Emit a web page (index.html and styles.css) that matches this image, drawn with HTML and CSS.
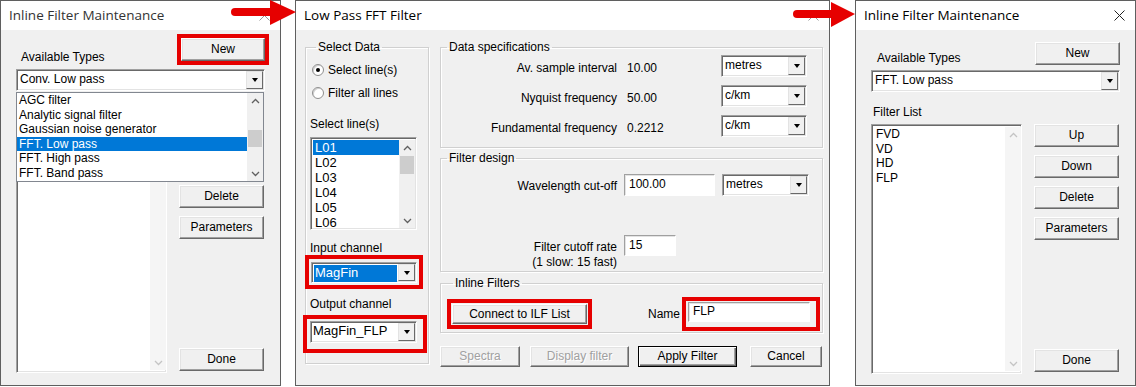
FILE: index.html
```html
<!DOCTYPE html>
<html lang="en">
<head>
  <meta charset="UTF-8">
  <meta name="viewport" content="width=device-width, initial-scale=1">
  <title>Inline Filter Maintenance</title>
  <link rel="stylesheet" href="styles.css">
</head>
<body>
<div class="desk">

  <!-- Janela 1: lista de tipos aberta -->
  <div class="dlg ilf ilf-first">
    <div class="titlebar">
      <span class="title title-off">Inline Filter Maintenance</span>
      <svg class="close close-off" width="11" height="11" viewBox="0 0 11 11"><path d="M0.5 0.5 L10.5 10.5 M10.5 0.5 L0.5 10.5" stroke="currentColor" stroke-width="1"/></svg>
    </div>
    <div class="ilf-body">
      <div class="ilf-top">
        <span class="lbl">Available Types</span>
        <span class="mark mark-new"><button class="btn btn-new">New</button></span>
      </div>
      <div class="combo ilf-combo"><span class="combo-text">Conv. Low pass</span><span class="combo-btn"><i class="tri"></i></span></div>
      <!-- rótulo coberto pela lista suspensa -->
      <div class="lbl ilf-listlbl ilf-gap"></div>
      <div class="ilf-main">
        <div class="listbox ilf-list">
          <div class="list-items"></div>
          <div class="vscroll vscroll-pale">
            <span class="sb-arrow"></span>
            <span class="sb-track"></span>
            <span class="sb-arrow"><svg width="9" height="6" viewBox="0 0 9 6"><polyline points="1,1 4.5,4.5 8,1" fill="none" stroke="#c4c4c4" stroke-width="1.3"/></svg></span>
          </div>
        </div>
        <div class="btn-col">
          <span class="btn-slot"></span>
          <span class="btn-slot"></span>
          <button class="btn">Delete</button>
          <button class="btn">Parameters</button>
          <button class="btn btn-done">Done</button>
        </div>
      </div>
    </div>

    <!-- lista suspensa do combo -->
    <div class="dropdown">
      <div class="dd-items">
        <div class="item">AGC filter</div>
        <div class="item">Analytic signal filter</div>
        <div class="item">Gaussian noise generator</div>
        <div class="item sel">FFT. Low pass</div>
        <div class="item">FFT. High pass</div>
        <div class="item">FFT. Band pass</div>
      </div>
      <div class="vscroll">
        <span class="sb-arrow"><svg width="9" height="6" viewBox="0 0 9 6"><polyline points="1,5 4.5,1.5 8,5" fill="none" stroke="#606060" stroke-width="1.3"/></svg></span>
        <span class="sb-track"><span class="sb-thumb dd-thumb"></span></span>
        <span class="sb-arrow"><svg width="9" height="6" viewBox="0 0 9 6"><polyline points="1,1 4.5,4.5 8,1" fill="none" stroke="#606060" stroke-width="1.3"/></svg></span>
      </div>
    </div>
  </div>

  <!-- Janela 2: filtro FFT -->
  <div class="dlg fft">
    <div class="titlebar">
      <span class="title">Low Pass FFT Filter</span>
      <svg class="close close-off" width="11" height="11" viewBox="0 0 11 11"><path d="M0.5 0.5 L10.5 10.5 M10.5 0.5 L0.5 10.5" stroke="currentColor" stroke-width="1"/></svg>
    </div>
    <div class="fft-body">

      <fieldset class="group sel-data">
        <legend>Select Data</legend>
        <div class="radio-row"><span class="radio on"></span>Select line(s)</div>
        <div class="radio-row radio-row2"><span class="radio"></span>Filter all lines</div>
        <div class="lbl lines-lbl">Select line(s)</div>
        <div class="listbox lines-list">
          <div class="list-items">
            <div class="item sel">L01</div>
            <div class="item">L02</div>
            <div class="item">L03</div>
            <div class="item">L04</div>
            <div class="item">L05</div>
            <div class="item">L06</div>
          </div>
          <div class="vscroll">
            <span class="sb-arrow"><svg width="9" height="6" viewBox="0 0 9 6"><polyline points="1,5 4.5,1.5 8,5" fill="none" stroke="#606060" stroke-width="1.3"/></svg></span>
            <span class="sb-track"><span class="sb-thumb lines-thumb"></span></span>
            <span class="sb-arrow"><svg width="9" height="6" viewBox="0 0 9 6"><polyline points="1,1 4.5,4.5 8,1" fill="none" stroke="#606060" stroke-width="1.3"/></svg></span>
          </div>
        </div>
        <div class="lbl chan-lbl">Input channel</div>
        <div class="mark mark-in">
          <div class="combo chan-combo"><span class="combo-text"><span class="hl-text">MagFin</span></span><span class="combo-btn"><i class="tri"></i></span></div>
        </div>
        <div class="lbl chan-lbl chan-lbl2">Output channel</div>
        <div class="mark mark-out">
          <div class="combo chan-combo chan-combo2"><span class="combo-text">MagFin_FLP</span><span class="combo-btn"><i class="tri"></i></span></div>
        </div>
      </fieldset>

      <div class="fft-right">
        <fieldset class="group spec">
          <legend>Data specifications</legend>
          <div class="spec-grid">
            <span class="rlbl">Av. sample interval</span>
            <span class="val">10.00</span>
            <div class="combo"><span class="combo-text">metres</span><span class="combo-btn"><i class="tri"></i></span></div>

            <span class="rlbl">Nyquist frequency</span>
            <span class="val">50.00</span>
            <div class="combo"><span class="combo-text">c/km</span><span class="combo-btn"><i class="tri"></i></span></div>

            <span class="rlbl">Fundamental frequency</span>
            <span class="val">0.2212</span>
            <div class="combo"><span class="combo-text">c/km</span><span class="combo-btn"><i class="tri"></i></span></div>
          </div>
        </fieldset>

        <fieldset class="group design">
          <legend>Filter design</legend>
          <div class="design-grid">
            <span class="rlbl wave-lbl">Wavelength cut-off</span>
            <span class="field">100.00</span>
            <div class="combo"><span class="combo-text">metres</span><span class="combo-btn"><i class="tri"></i></span></div>

            <span class="rlbl rate-lbl">Filter cutoff rate<br>(1 slow: 15 fast)</span>
            <span class="field rate-field">15</span>
          </div>
        </fieldset>

        <fieldset class="group inline">
          <legend>Inline Filters</legend>
          <div class="inline-row">
            <span class="mark mark-connect"><button class="btn btn-connect">Connect to ILF List</button></span>
            <span class="name-lbl">Name</span>
            <span class="mark mark-name"><span class="field name-field">FLP</span></span>
          </div>
        </fieldset>

        <div class="fft-buttons">
          <button class="btn btn-off btn-spectra">Spectra</button>
          <button class="btn btn-off btn-display">Display filter</button>
          <button class="btn btn-default btn-apply">Apply Filter</button>
          <button class="btn btn-cancel">Cancel</button>
        </div>
      </div>
    </div>
  </div>

  <!-- Janela 3: lista de filtros -->
  <div class="dlg ilf ilf-last">
    <div class="titlebar">
      <span class="title">Inline Filter Maintenance</span>
      <svg class="close" width="11" height="11" viewBox="0 0 11 11"><path d="M0.5 0.5 L10.5 10.5 M10.5 0.5 L0.5 10.5" stroke="currentColor" stroke-width="1"/></svg>
    </div>
    <div class="ilf-body">
      <div class="ilf-top">
        <span class="lbl">Available Types</span>
        <button class="btn">New</button>
      </div>
      <div class="combo ilf-combo"><span class="combo-text">FFT. Low pass</span><span class="combo-btn"><i class="tri"></i></span></div>
      <div class="lbl ilf-listlbl">Filter List</div>
      <div class="ilf-main">
        <div class="listbox ilf-list">
          <div class="list-items">
            <div class="item">FVD</div>
            <div class="item">VD</div>
            <div class="item">HD</div>
            <div class="item">FLP</div>
          </div>
          <div class="vscroll vscroll-pale">
            <span class="sb-arrow"><svg width="9" height="6" viewBox="0 0 9 6"><polyline points="1,5 4.5,1.5 8,5" fill="none" stroke="#c4c4c4" stroke-width="1.3"/></svg></span>
            <span class="sb-track"></span>
            <span class="sb-arrow"><svg width="9" height="6" viewBox="0 0 9 6"><polyline points="1,1 4.5,4.5 8,1" fill="none" stroke="#c4c4c4" stroke-width="1.3"/></svg></span>
          </div>
        </div>
        <div class="btn-col">
          <button class="btn">Up</button>
          <button class="btn">Down</button>
          <button class="btn">Delete</button>
          <button class="btn">Parameters</button>
          <button class="btn btn-done">Done</button>
        </div>
      </div>
    </div>
  </div>

  <!-- setas vermelhas por cima -->
  <svg class="arrow arrow-a" width="68" height="26" viewBox="0 0 68 26">
    <line x1="6" y1="12" x2="44" y2="12" stroke="#e60000" stroke-width="8" stroke-linecap="round"/>
    <polygon points="41,0 67,12 41,25" fill="#e60000"/>
  </svg>
  <svg class="arrow arrow-b" width="68" height="26" viewBox="0 0 68 26">
    <line x1="6" y1="12" x2="44" y2="12" stroke="#e60000" stroke-width="8" stroke-linecap="round"/>
    <polygon points="40,0 64,12 40,25" fill="#e60000"/>
  </svg>
</div>
</body>
</html>
```

FILE: styles.css
```css
* {
  box-sizing: border-box;
}

body {
  margin: 0;
  background: #fff;
  font-family: "Liberation Sans", Arial, sans-serif;
  font-size: 12px;
  color: #000;
}

.desk {
  position: relative;
  display: flex;
  width: 1136px;
  height: 387px;
  overflow: hidden;
}

/* janelas */
.dlg {
  position: relative;
  display: flex;
  flex-direction: column;
  height: 386px;
  border: 1px solid #5f5f5f;
  background: #f0f0f0;
}

.ilf {
  width: 281px;
}

.fft {
  width: 535px;
  margin-left: 14px;
}

.ilf-last {
  margin-left: 25px;
}

.titlebar {
  display: flex;
  align-items: center;
  height: 29px;
  padding: 0 10px 1px 8px;
  background: #fff;
}

.title {
  font-family: "Open Sans", "Noto Sans", sans-serif;
  font-size: 13.5px;
}

.title-off {
  color: #333;
}

.close {
  margin-left: auto;
  color: #222;
}

.close-off {
  color: #999;
}

.lbl {
  line-height: 14px;
}

/* botões */
.btn {
  display: flex;
  align-items: center;
  justify-content: center;
  width: 85px;
  height: 23px;
  padding: 0 0 1px;
  font: inherit;
  color: #000;
  background: #f0f0f0;
  border: 1px solid;
  border-color: #fff #696969 #696969 #fff;
  box-shadow: inset -1px -1px #a0a0a0, inset 1px 1px #e3e3e3;
}

.btn-slot {
  display: block;
  height: 23px;
}

.btn-off {
  color: #a0a0a0;
  text-shadow: 1px 1px #fff;
}

.btn-default {
  border: 1px solid #000;
  box-shadow: inset 1px 1px #fff, inset -1px -1px #696969, inset -2px -2px #a0a0a0;
}

/* marcações vermelhas */
.mark {
  display: flex;
  border: 4px solid #e60000;
}

.mark-new {
  margin-right: -4px;
}

.btn-new {
  width: 84px;
}

/* combo */
.combo {
  display: flex;
  height: 22px;
  background: #fff;
  border: 1px solid;
  border-color: #a0a0a0 #fff #fff #a0a0a0;
  box-shadow: inset 1px 1px #696969, inset -1px -1px #e3e3e3;
}

.combo-text {
  flex: 1;
  padding: 2px 0 0 3px;
  line-height: 14px;
  white-space: nowrap;
  overflow: hidden;
}

.combo-btn {
  display: flex;
  align-items: center;
  justify-content: center;
  width: 17px;
  margin: 1px 1px 1px 0;
  background: #f0f0f0;
  border: 1px solid;
  border-color: #e3e3e3 #696969 #696969 #e3e3e3;
}

.tri {
  width: 0;
  height: 0;
  border-left: 3.5px solid transparent;
  border-right: 3.5px solid transparent;
  border-top: 4px solid #000;
}

.field {
  display: block;
  height: 22px;
  padding: 2px 0 0 4px;
  line-height: 14px;
  background: #fff;
  border: 1px solid;
  border-color: #a0a0a0 #fff #fff #a0a0a0;
  box-shadow: inset 1px 1px #e3e3e3;
}

/* listas */
.listbox {
  display: flex;
  background: #fff;
  border: 1px solid;
  border-color: #a0a0a0 #fff #fff #a0a0a0;
  box-shadow: inset 1px 1px #696969, inset -1px -1px #e3e3e3;
  padding: 2px 1px 1px 2px;
}

.list-items {
  flex: 1;
  min-width: 0;
}

.item {
  height: 14.5px;
  line-height: 14.5px;
  padding-left: 2px;
  white-space: nowrap;
}

.item.sel {
  background: #0078d7;
  color: #fff;
}

.vscroll {
  display: flex;
  flex-direction: column;
  width: 16px;
  background: #f0f0f0;
}

.vscroll-pale {
  background: #f5f5f5;
}

.sb-arrow {
  display: flex;
  align-items: center;
  justify-content: center;
  height: 15px;
}

.sb-track {
  flex: 1;
  display: flex;
  flex-direction: column;
  padding: 0 1px;
}

.sb-thumb {
  height: 17px;
  background: #cdcdcd;
}

/* janela de manutenção */
.ilf-body {
  display: flex;
  flex-direction: column;
  padding: 12px 15px 0;
}

.ilf-first .ilf-body {
  padding-top: 4px;
}

.ilf-top {
  display: flex;
  justify-content: space-between;
  align-items: flex-end;
}

.ilf-top .lbl {
  padding-left: 6px;
}

.ilf-first .ilf-top .lbl {
  padding-left: 5px;
  margin-bottom: 1px;
}

.ilf-combo {
  margin-top: 5px;
}

.ilf-first .ilf-combo {
  margin-top: 4px;
}

.ilf-listlbl {
  margin-top: 13px;
  padding-left: 2px;
}

.ilf-gap {
  height: 14px;
}

.ilf-main {
  display: flex;
  gap: 12px;
  height: 250px;
  margin-top: 5px;
}

.ilf-list {
  width: 151px;
  padding-right: 0;
}

.ilf-list .vscroll {
  margin-bottom: 1px;
}

.btn-col {
  display: flex;
  flex-direction: column;
  gap: 8px;
  padding-bottom: 2px;
}

.btn-done {
  margin-top: auto;
}

.dropdown {
  position: absolute;
  top: 91px;
  left: 15px;
  display: flex;
  width: 248px;
  height: 90px;
  background: #fff;
  border: 1px solid #828790;
}

.dd-items {
  flex: 1;
}

.dd-thumb {
  margin-top: 22px;
}

/* janela do filtro FFT */
.fft-body {
  display: grid;
  grid-template-columns: 124px 383px;
  column-gap: 11px;
  padding: 10px 0 0 9px;
}

.group {
  min-width: 0;
  margin: 0;
  border: 1px solid #d0d0d0;
  box-shadow: 1px 1px #fff, inset 1px 1px #fff;
}

.group legend {
  margin-left: 6px;
  padding: 0 2px;
  line-height: 14px;
}

.sel-data {
  display: flex;
  flex-direction: column;
  height: 324px;
  padding: 8px 0 0 4px;
}

.radio-row {
  display: flex;
  align-items: center;
  gap: 4px;
  height: 16px;
  padding-left: 2px;
}

.radio-row2 {
  margin-top: 7px;
}

.radio {
  position: relative;
  width: 12px;
  height: 12px;
  border-radius: 50%;
  background: #fff;
  border: 1px solid #8f8f8f;
  box-shadow: inset 1px 1px #d0d0d0;
}

.radio.on::after {
  content: "";
  position: absolute;
  top: 3px;
  left: 3px;
  width: 4px;
  height: 4px;
  border-radius: 50%;
  background: #000;
}

.lines-lbl {
  margin-top: 16px;
}

.lines-list {
  width: 107px;
  height: 93px;
  margin-top: 6px;
}

.lines-list .item {
  height: 15px;
  line-height: 15px;
  font-size: 13px;
}

.lines-thumb {
  margin-top: 1px;
  height: 18px;
}

.chan-lbl {
  margin-top: 11px;
}

.chan-lbl2 {
  margin-top: 8px;
}

.mark-in {
  width: 118px;
  margin-left: -5px;
  padding: 3px 0 2px 2px;
}

.mark-out {
  width: 124px;
  margin: 4px 0 0 -7px;
  padding: 2px 0 6px 3px;
}

.chan-combo {
  width: 106px;
  height: 21px;
  font-size: 13px;
}

.chan-combo2 {
  width: 107px;
  height: 22px;
}

.chan-combo .combo-text {
  padding: 2px 1px 1px 2px;
}

.hl-text {
  display: block;
  height: 17px;
  padding-left: 1px;
  line-height: 15px;
  background: #0078d7;
  color: #fff;
}

.fft-right {
  display: flex;
  flex-direction: column;
}

.spec {
  padding: 1px 15px 10px 0;
}

.spec-grid {
  display: grid;
  grid-template-columns: 176px 84px 86px;
  column-gap: 10px;
  row-gap: 8px;
  align-items: start;
}

.spec-grid .rlbl,
.spec-grid .val {
  padding-top: 6px;
}

.rlbl {
  text-align: right;
  line-height: 15px;
}

.val {
  line-height: 15px;
}

.design {
  margin-top: 3px;
  padding: 9px 0 1px 0;
}

.design-grid {
  display: grid;
  grid-template-columns: 176px 91px 87px;
  column-gap: 7px;
  row-gap: 39px;
  align-items: start;
}

.wave-lbl {
  padding-top: 5px;
}

.rate-lbl {
  margin-top: 5px;
}

.rate-field {
  width: 52px;
  height: 21px;
}

.inline {
  margin-top: 4px;
  padding: 7px 2px 1px 6px;
}

.inline-row {
  display: flex;
  align-items: center;
}

.mark-connect {
  padding: 1px;
}

.btn-connect {
  width: 135px;
  height: 20px;
}

.name-lbl {
  margin-left: auto;
  margin-right: 2px;
}

.mark-name {
  padding: 1px 6px 5px 2px;
}

.name-field {
  width: 122px;
  height: 20px;
  padding-top: 1px;
}

.fft-buttons {
  display: flex;
  margin-top: 13px;
}

.fft-buttons .btn {
  height: 21px;
}

.btn-spectra {
  width: 80px;
}

.btn-display {
  width: 99px;
  margin-left: 10px;
}

.btn-apply {
  width: 99px;
  margin-left: 9px;
}

.btn-cancel {
  width: 72px;
  margin-left: 13px;
}

/* setas */
.arrow {
  position: absolute;
  top: 0;
}

.arrow-a {
  left: 229px;
}

.arrow-b {
  left: 791px;
  top: 2px;
}
```
